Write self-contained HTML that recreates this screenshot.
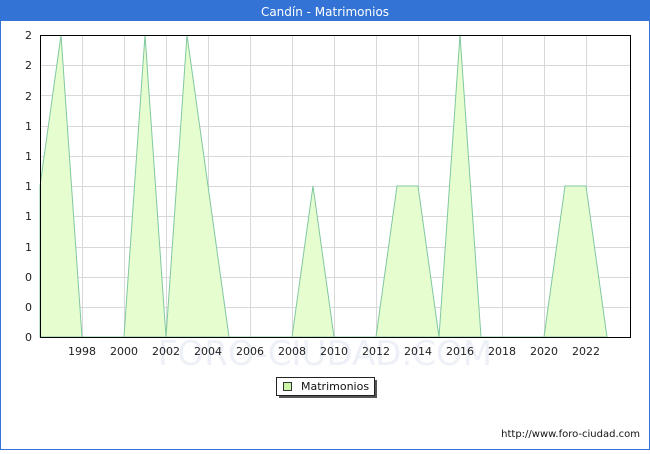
<!DOCTYPE html>
<html><head><meta charset="utf-8"><style>
body{margin:0;width:650px;height:450px;overflow:hidden;font-family:"DejaVu Sans","Liberation Sans",sans-serif}
</style></head><body>
<svg width="650" height="450" xmlns="http://www.w3.org/2000/svg" font-family="DejaVu Sans, Liberation Sans, sans-serif">
<rect x="0" y="0" width="650" height="450" fill="#3473d6"/>
<rect x="1" y="21" width="648" height="428" fill="#fff"/>
<text x="325" y="16" fill="#fff" font-size="12" text-anchor="middle">Candín - Matrimonios</text>
<text x="325" y="365" fill="#eef0f8" font-size="34" text-anchor="middle">FORO-CIUDAD.COM</text>
<g stroke="#d8d8d8" stroke-width="1">
<line x1="40" y1="65.5" x2="630" y2="65.5"/><line x1="40" y1="95.5" x2="630" y2="95.5"/><line x1="40" y1="126.5" x2="630" y2="126.5"/><line x1="40" y1="156.5" x2="630" y2="156.5"/><line x1="40" y1="186.5" x2="630" y2="186.5"/><line x1="40" y1="216.5" x2="630" y2="216.5"/><line x1="40" y1="247.5" x2="630" y2="247.5"/><line x1="40" y1="277.5" x2="630" y2="277.5"/><line x1="40" y1="307.5" x2="630" y2="307.5"/>
<line x1="82.5" y1="35" x2="82.5" y2="337"/><line x1="124.5" y1="35" x2="124.5" y2="337"/><line x1="166.5" y1="35" x2="166.5" y2="337"/><line x1="208.5" y1="35" x2="208.5" y2="337"/><line x1="250.5" y1="35" x2="250.5" y2="337"/><line x1="292.5" y1="35" x2="292.5" y2="337"/><line x1="334.5" y1="35" x2="334.5" y2="337"/><line x1="376.5" y1="35" x2="376.5" y2="337"/><line x1="418.5" y1="35" x2="418.5" y2="337"/><line x1="460.5" y1="35" x2="460.5" y2="337"/><line x1="502.5" y1="35" x2="502.5" y2="337"/><line x1="544.5" y1="35" x2="544.5" y2="337"/><line x1="586.5" y1="35" x2="586.5" y2="337"/>
</g>
<polygon fill="#e6fdd0" stroke="#80c8a0" stroke-width="1" points="40,337 40,186 61,35 82,337 103,337 124,337 145,35 166,337 187,35 208,186 229,337 250,337 271,337 292,337 313,186 334,337 355,337 376,337 397,186 418,186 439,337 460,35 481,337 502,337 523,337 544,337 565,186 586,186 607,337"/>
<rect x="40.5" y="35.5" width="590" height="302" fill="none" stroke="#000" stroke-width="1"/>
<g font-size="11" fill="#222" text-anchor="end">
<text x="32" y="39">2</text><text x="32" y="69">2</text><text x="32" y="100">2</text><text x="32" y="130">1</text><text x="32" y="160">1</text><text x="32" y="190">1</text><text x="32" y="220">1</text><text x="32" y="251">1</text><text x="32" y="281">0</text><text x="32" y="311">0</text><text x="32" y="341">0</text>
</g>
<g font-size="11" fill="#222" text-anchor="middle">
<text x="82" y="355">1998</text><text x="124" y="355">2000</text><text x="166" y="355">2002</text><text x="208" y="355">2004</text><text x="250" y="355">2006</text><text x="292" y="355">2008</text><text x="334" y="355">2010</text><text x="376" y="355">2012</text><text x="418" y="355">2014</text><text x="460" y="355">2016</text><text x="502" y="355">2018</text><text x="544" y="355">2020</text><text x="586" y="355">2022</text>
</g>
<rect x="279" y="380" width="98" height="18" fill="#555"/>
<rect x="276.5" y="377.5" width="98" height="18" fill="#fff" stroke="#222"/>
<rect x="283.5" y="382.5" width="8" height="8" fill="#ccf5a8" stroke="#333"/>
<text x="301" y="390" font-size="11" fill="#111">Matrimonios</text>
<text x="640" y="437" font-size="10" fill="#111" text-anchor="end">http://www.foro-ciudad.com</text>
</svg>
</body></html>
